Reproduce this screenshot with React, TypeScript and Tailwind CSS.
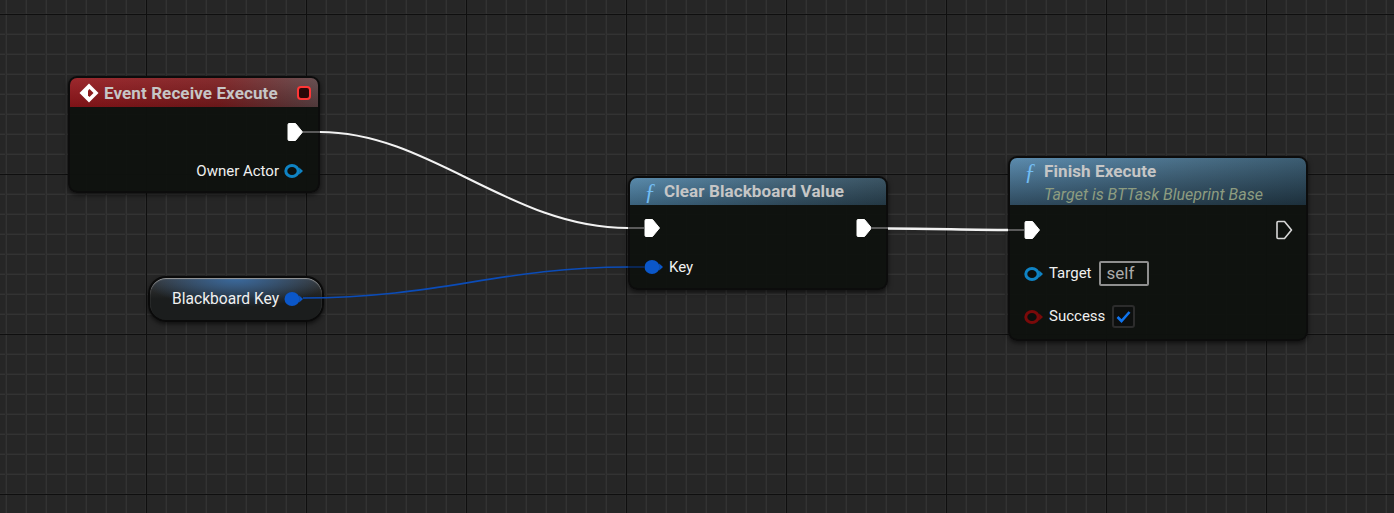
import type { ReactNode } from 'react';

function ExecPin({ hollow = false }: { hollow?: boolean }) {
  return (
    <svg width="18" height="20" viewBox="0 0 18 20" className="block shrink-0">
      <path
        d="M2 2.5 Q2 1.5 3 1.5 H9.5 L16.5 10 L9.5 18.5 H3 Q2 18.5 2 17.5 Z"
        fill={hollow ? 'none' : '#ffffff'}
        stroke={hollow ? '#d8d8d8' : '#ffffff'}
        strokeWidth={hollow ? 1.6 : 1}
        strokeLinejoin="round"
      />
    </svg>
  );
}

function DataPin({ color, filled = false }: { color: string; filled?: boolean }) {
  return (
    <svg width="20" height="16" viewBox="0 0 20 16" className="block shrink-0">
      <ellipse
        cx="8"
        cy="8"
        rx={filled ? 7.5 : 6.2}
        ry={filled ? 7 : 5.6}
        fill={filled ? color : '#0b0f0d'}
        stroke={color}
        strokeWidth={filled ? 0 : 3}
      />
      <path d="M15.2 4.6 L19 8 L15.2 11.4 Z" fill={color} />
    </svg>
  );
}

function FunctionIcon() {
  return (
    <span className="w-5 shrink-0 text-center font-['Liberation_Serif',serif] text-[23px] italic leading-none text-[#72bcf2]">
      ƒ
    </span>
  );
}

function EventIcon() {
  return (
    <svg width="20" height="20" viewBox="0 0 20 20" className="block shrink-0">
      <path d="M10 0.5 L19.5 10 L10 19.5 L0.5 10 Z" fill="#ffffff" />
      <path d="M10.5 6 L14.5 10 L10.5 14 L9 12.5 L9 7.5 Z" fill="#8a1a1c" />
    </svg>
  );
}

function NodeShell({ className, children }: { className: string; children: ReactNode }) {
  return (
    <div
      className={`absolute rounded-[9px] border-2 border-[#0c0c0c] bg-[#0f120ff5] shadow-[0_2px_5px_rgba(0,0,0,0.6)] ${className}`}
    >
      {children}
    </div>
  );
}

function PinRow({ className = '', children }: { className?: string; children: ReactNode }) {
  return <div className={`flex items-center ${className}`}>{children}</div>;
}

function Wires() {
  return (
    <svg width="1394" height="513" viewBox="0 0 1394 513" className="absolute left-0 top-0" fill="none">
      <path d="M303 298 C 440 298 500 267 628 267" stroke="#0b4cb8" strokeWidth="1.6" />
      <path d="M628 267 H644" stroke="#0a2c66" strokeWidth="1.6" />
      <path d="M303 132 H320" stroke="#5a5a5a" strokeWidth="2" />
      <path d="M320 132 C 430 132 510 228 628 228" stroke="#f2f2f2" strokeWidth="2" />
      <path d="M628 228 H644" stroke="#5a5a5a" strokeWidth="2" />
      <path d="M871 228 H888" stroke="#5a5a5a" strokeWidth="2" />
      <path d="M888 228.5 C 930 228.5 970 230 1008 230" stroke="#f2f2f2" strokeWidth="2.4" />
      <path d="M1008 230 H1024" stroke="#5a5a5a" strokeWidth="2" />
    </svg>
  );
}

const labelClass = 'text-[15px] leading-none';
const titleClass = 'text-[17px] font-bold leading-none tracking-[0.1px] text-[#c6c6c6]';

export default function App() {
  return (
    <div className="relative h-[513px] w-[1394px] overflow-hidden bg-[#262626] font-['Roboto',sans-serif] text-[#f0f0f0] [background-image:linear-gradient(to_right,#0f0f0f_1px,transparent_1px),linear-gradient(to_bottom,#0f0f0f_1px,transparent_1px),linear-gradient(to_right,#2b2b2b_1px,#333333_1px,#333333_2px,transparent_2px),linear-gradient(to_bottom,#2b2b2b_1px,#333333_1px,#333333_2px,transparent_2px)] [background-position:146px_0,0_14px,5px_0,0_13px] [background-size:160px_160px,160px_160px,20px_20px,20px_20px]">
      {/* Event Receive Execute */}
      <NodeShell className="left-[68px] top-[76px] h-[117px] w-[252px]">
        <div className="flex h-[29px] items-center rounded-t-[7px] bg-[linear-gradient(to_bottom,rgba(255,255,255,0.08),rgba(0,0,0,0.15)),linear-gradient(to_right,#94161b,#7a1b1d_60%,#5c4244)] pl-[9px] pr-[7px]">
          <EventIcon />
          <span className={`ml-[5px] pt-[2px] ${titleClass}`}>Event Receive Execute</span>
          <span className="ml-auto h-[14px] w-[14px] rounded-[4px] border-2 border-[#ff3636] bg-[#2a0808]" />
        </div>
        <PinRow className="mt-[15px] justify-end pr-[14px]">
          <ExecPin />
        </PinRow>
        <PinRow className="mt-[21px] justify-end pr-[14px]">
          <span className={`mr-[5px] ${labelClass}`}>Owner Actor</span>
          <DataPin color="#0f83c4" />
        </PinRow>
      </NodeShell>

      {/* Blackboard Key getter */}
      <div className="absolute left-[148px] top-[276px] flex h-[46px] w-[176px] items-center rounded-[18px] border-2 border-[#0a0a0a] bg-[radial-gradient(ellipse_55%_70%_at_50%_0%,#3a6a9f,transparent),linear-gradient(to_bottom,#3a3a3a,#1b1d1d_50%)] pl-[22px] shadow-[inset_0_1px_1px_#9a9a9a,0_2px_4px_rgba(0,0,0,0.6)]">
        <span className="pt-[2px] text-[15.6px] leading-none">Blackboard Key</span>
        <span className="ml-[5px]">
          <DataPin color="#0b57c9" filled />
        </span>
      </div>

      {/* Clear Blackboard Value */}
      <NodeShell className="left-[628px] top-[176px] h-[114px] w-[260px]">
        <div className="flex h-[27px] items-center rounded-t-[7px] bg-[linear-gradient(to_bottom,rgba(255,255,255,0.06),rgba(0,0,0,0.25)),linear-gradient(to_right,#4f83a6,#3c5e74_60%,#2f4a5a)] pl-[10px]">
          <FunctionIcon />
          <span className={`ml-[4px] ${titleClass}`}>Clear Blackboard Value</span>
        </div>
        <PinRow className="mt-[13px] justify-between pl-[13px] pr-[13px]">
          <ExecPin />
          <ExecPin />
        </PinRow>
        <PinRow className="mt-[21px] pl-[14px]">
          <DataPin color="#0b57c9" filled />
          <span className={`ml-[5px] ${labelClass}`}>Key</span>
        </PinRow>
      </NodeShell>

      {/* Finish Execute */}
      <NodeShell className="left-[1008px] top-[156px] h-[185px] w-[300px]">
        <div className="h-[47px] rounded-t-[7px] bg-[linear-gradient(to_bottom,rgba(255,255,255,0.04),rgba(0,0,0,0.45)),linear-gradient(to_right,#5587ab,#436a84_60%,#34566c)] pl-[10px] pt-[2px]">
          <div className="flex items-center">
            <FunctionIcon />
            <span className={`ml-[4px] ${titleClass}`}>Finish Execute</span>
          </div>
          <div className="ml-[24px] mt-[4px] text-[16px] italic leading-none text-[#8d9c80]">Target is BTTask Blueprint Base</div>
        </div>
        <PinRow className="mt-[15px] justify-between pl-[13px] pr-[13px]">
          <ExecPin />
          <ExecPin hollow />
        </PinRow>
        <PinRow className="mt-[21px] pl-[14px]">
          <DataPin color="#0f83c4" />
          <span className={`ml-[5px] ${labelClass}`}>Target</span>
          <span className="ml-[7px] flex h-[25px] w-[50px] items-center rounded-[2px] border-2 border-[#8f8f8f] pl-[6px] text-[17px] leading-none text-[#aaaaaa]">
            self
          </span>
        </PinRow>
        <PinRow className="mt-[19px] pl-[14px]">
          <DataPin color="#7a0a0a" />
          <span className={`ml-[5px] ${labelClass}`}>Success</span>
          <span className="ml-[7px] flex h-[23px] w-[23px] items-center justify-center rounded-[3px] border-2 border-[#2c2c2c] bg-[#0d0f0e]">
            <svg width="15" height="13" viewBox="0 0 15 13" fill="none">
              <path d="M1.5 7 L5.5 11 L13.5 2" stroke="#0f74ee" strokeWidth="2.6" />
            </svg>
          </span>
        </PinRow>
      </NodeShell>

      <Wires />
    </div>
  );
}
